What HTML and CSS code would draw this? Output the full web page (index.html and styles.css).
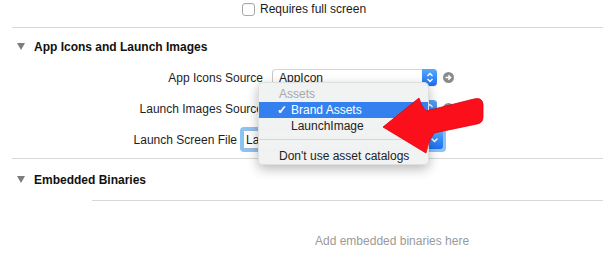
FILE: index.html
```html
<!DOCTYPE html>
<html>
<head>
<meta charset="utf-8">
<link rel="stylesheet" href="styles.css">
</head>
<body>
<div class="page">
  <div class="topbar">
    <span class="checkbox"></span>
    <span class="label">Requires full screen</span>
  </div>
  <div class="rule"></div>

  <div class="section-head first">
    <span class="disclosure"></span>
    <span class="title">App Icons and Launch Images</span>
  </div>

  <div class="rows">
    <div class="row">
      <div class="row-label wide">App Icons Source</div>
      <div class="popup">
        <span class="popup-text">AppIcon</span>
        <span class="stepper">
          <svg width="8" height="11" viewBox="0 0 8 11"><path d="M1.5 4 L4 1.5 L6.5 4 M1.5 7 L4 9.5 L6.5 7" fill="none" stroke="#fff" stroke-width="1.4"/></svg>
        </span>
      </div>
      <span class="goto"><svg width="11" height="11" viewBox="0 0 11 11"><circle cx="5.5" cy="5.5" r="5.5" fill="#8a8a8a"/><path d="M2.5 5.5 H7.5 M5.3 3.2 L7.6 5.5 L5.3 7.8" fill="none" stroke="#fff" stroke-width="1.5"/></svg></span>
    </div>
    <div class="row">
      <div class="row-label wide">Launch Images Source</div>
      <div class="popup">
        <span class="popup-text"></span>
        <span class="stepper">
          <svg width="8" height="11" viewBox="0 0 8 11"><path d="M1.5 4 L4 1.5 L6.5 4 M1.5 7 L4 9.5 L6.5 7" fill="none" stroke="#fff" stroke-width="1.4"/></svg>
        </span>
      </div>
      <span class="goto"><svg width="11" height="11" viewBox="0 0 11 11"><circle cx="5.5" cy="5.5" r="5.5" fill="#8a8a8a"/><path d="M2.5 5.5 H7.5 M5.3 3.2 L7.6 5.5 L5.3 7.8" fill="none" stroke="#fff" stroke-width="1.5"/></svg></span>
    </div>
    <div class="row">
      <div class="row-label narrow">Launch Screen File</div>
      <div class="combo-ring">
        <div class="combo">
          <span class="combo-text">La</span>
          <span class="combo-btn">
            <svg width="9" height="6" viewBox="0 0 9 6"><path d="M1.5 1.5 L4.5 4.5 L7.5 1.5" fill="none" stroke="#fff" stroke-width="1.4"/></svg>
          </span>
        </div>
      </div>
    </div>
  </div>
  <div class="rule"></div>

  <div class="section-head second">
    <span class="disclosure"></span>
    <span class="title">Embedded Binaries</span>
  </div>
  <div class="rule indent"></div>
  <div class="empty">Add embedded binaries here</div>

  <div class="menu">
    <div class="menu-item header">Assets</div>
    <div class="menu-item selected"><span class="check">✓</span><span>Brand Assets</span></div>
    <div class="menu-item sub">LaunchImage</div>
    <div class="menu-sep"></div>
    <div class="menu-item">Don't use asset catalogs</div>
  </div>

  <svg class="red-arrow" width="603" height="255" viewBox="0 0 603 255">
    <path d="M383 127 L419 98 Q421 106 426 111 L474 99 Q482 97 483 104 L483 117 Q483 123 477 124 L434 133 Q428 141 426 153 Z" fill="#fa0f1b" stroke="#e0000c" stroke-width="0.8" stroke-linejoin="round"/>
  </svg>
</div>
</body>
</html>
```

FILE: styles.css
```css
html, body {
  margin: 0;
  padding: 0;
  background: #ffffff;
}

body {
  font-family: "Liberation Sans", Arial, sans-serif;
  font-size: 12px;
  color: #1a1a1a;
}

.page {
  position: relative;
  width: 603px;
  height: 255px;
  overflow: hidden;
}

.topbar {
  height: 27px;
  box-sizing: border-box;
  padding: 0 0 9px 242px;
  display: flex;
  align-items: center;
  gap: 5px;
}

.checkbox {
  width: 11px;
  height: 11px;
  border: 1px solid #a9a9a9;
  border-radius: 3px;
  background: #fff;
  box-shadow: inset 0 1px 1px rgba(0,0,0,0.05);
}

.rule {
  margin-left: 12px;
  border-top: 1px solid #d8d8d8;
}

.rule.indent {
  margin-left: 92px;
}

.section-head {
  display: flex;
  align-items: center;
  padding-left: 17px;
  gap: 9px;
  box-sizing: border-box;
}

.section-head.first {
  height: 34px;
  padding-top: 3px;
}

.section-head.second {
  height: 41px;
}

.disclosure {
  width: 0;
  height: 0;
  border-left: 4px solid transparent;
  border-right: 4px solid transparent;
  border-top: 7px solid #7d7d7d;
}

.title {
  font-weight: bold;
  color: #111;
}

.rows {
  padding-bottom: 3px;
}

.row {
  height: 31px;
  display: flex;
  align-items: center;
}

.row-label {
  text-align: right;
  white-space: nowrap;
  color: #1e1e1e;
}

.row-label.wide {
  width: 263px;
  margin-right: 9px;
}

.row-label.narrow {
  width: 237px;
  margin-right: 3px;
}

.popup {
  width: 165px;
  height: 17px;
  box-sizing: border-box;
  border: 1px solid #c9c9c9;
  border-top-color: #d6d6d6;
  border-bottom-color: #b5b5b5;
  border-radius: 4px;
  background: #fff;
  display: flex;
  align-items: center;
  justify-content: space-between;
  box-shadow: 0 1px 1px rgba(0,0,0,0.06);
}

.popup-text {
  padding-left: 6px;
}

.stepper {
  width: 15px;
  height: 17px;
  margin-right: -1px;
  border-radius: 0 4px 4px 0;
  background: linear-gradient(#5aa8fb, #1b6ff0);
  display: flex;
  align-items: center;
  justify-content: center;
}

.stepper svg {
  display: block;
}

.goto {
  margin-left: 6px;
  display: flex;
}

.combo-ring {
  padding: 3px;
  border-radius: 4px;
  background: #8cc3f5;
}

.combo {
  width: 200px;
  height: 19px;
  box-sizing: border-box;
  border: 1px solid #9fb9d6;
  background: #fff;
  display: flex;
  align-items: center;
  justify-content: space-between;
}

.combo-text {
  padding-left: 2px;
}

.combo-btn {
  width: 18px;
  height: 19px;
  margin-right: -1px;
  border-radius: 0 3px 3px 0;
  background: linear-gradient(#5aa8fb, #1b6ff0);
  display: flex;
  align-items: center;
  justify-content: center;
}

.combo-btn svg {
  display: block;
}

.empty {
  height: 80px;
  display: flex;
  align-items: center;
  padding-left: 315px;
  color: #9a9a9a;
}

.menu {
  position: absolute;
  left: 258px;
  top: 82px;
  width: 171px;
  height: 83px;
  box-sizing: border-box;
  padding-top: 3px;
  border-radius: 5px;
  background: rgba(241, 242, 242, 0.98);
  border: 1px solid rgba(0,0,0,0.08);
  box-shadow: 0 4px 12px rgba(0,0,0,0.28);
}

.menu-item {
  height: 16px;
  line-height: 16px;
  padding-left: 20px;
  color: #222;
  white-space: nowrap;
}

.menu-item.header {
  color: #a8a8a8;
}

.menu-item.sub {
  padding-left: 32px;
}

.menu-item.selected {
  background: #3580ef;
  color: #fff;
  padding-left: 18px;
  display: flex;
}

.check {
  width: 14px;
  font-weight: bold;
}

.menu-sep {
  height: 12px;
  box-sizing: border-box;
  background: linear-gradient(transparent 5px, #d6d6d6 5px, #d6d6d6 6px, transparent 6px);
  margin-bottom: 2px;
}

.red-arrow {
  position: absolute;
  left: 0;
  top: 0;
  pointer-events: none;
}
```
